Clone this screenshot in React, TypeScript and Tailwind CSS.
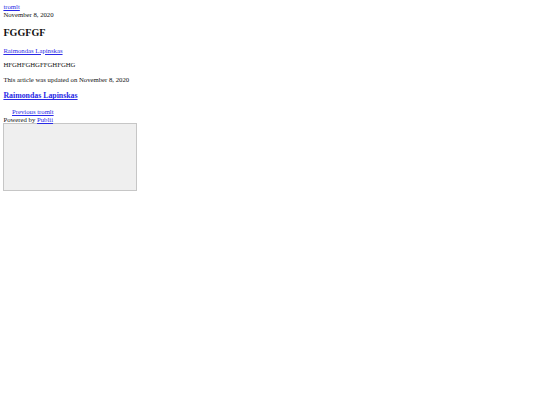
export default function App() {
  const link = "text-[#2a2ae6] underline";
  return (
    <div className="min-h-[405px] bg-white px-[3.4px] pt-[3.2px] text-[6.72px] leading-[1.15] text-[#111111]" style={{ fontFamily: '"Liberation Serif", "Times New Roman", serif' }}>
      <div>
        <a href="#" className={link}>tromlt</a>
        <br />
        <span>November 8, 2020</span>
      </div>
      <h2 className="my-[8.3px] text-[10.08px] font-bold leading-[1.15]">FGGFGF</h2>
      <p className="my-[6.72px]">
        <a href="#" className={link}>Raimondas Lapinskas</a>
      </p>
      <p className="my-[6.72px]">HFGHFGHGFFGHFGHG</p>
      <p className="my-[6.72px]">This article was updated on November 8, 2020</p>
      <h3 className="my-[7.84px] text-[7.84px] font-bold leading-[1.15]">
        <a href="#" className={link}>Raimondas Lapinskas</a>
      </h3>
      <div className="pl-[8.6px]">
        <a href="#" className={link}>Previous tromlt</a>
      </div>
      <div>
        Powered by <a href="#" className={link}>Publii</a>
      </div>
      <div className="mt-[-0.8px] h-[68px] w-[134px] border-[1.5px] border-solid border-[#c6c6c6] bg-[#efefef]" />
    </div>
  );
}
